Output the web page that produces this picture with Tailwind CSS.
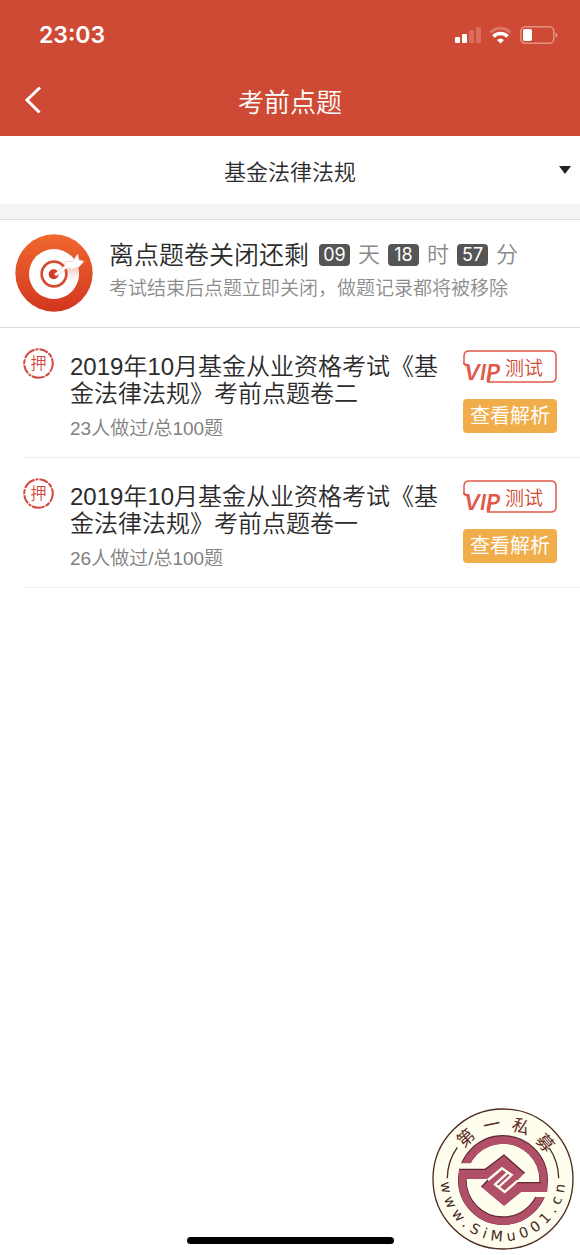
<!DOCTYPE html>
<html lang="zh-CN">
<head>
  <meta charset="UTF-8" />
  <meta name="viewport" content="width=device-width, initial-scale=1.0" />
  <title>考前点题</title>
  <script src="https://cdn.jsdelivr.net/npm/@tailwindcss/browser@4"></script>
</head>
<body class="relative min-h-screen flex flex-col bg-white text-[#2b2b2b] font-[350] font-['Liberation_Sans','Noto_Sans_CJK_SC',sans-serif]">

  <header class="bg-[#cf4a34] text-white">
    <!-- status bar -->
    <div class="h-[70px] pl-[39px] pr-[22px] flex items-center justify-between">
      <span class="text-[23px] font-semibold font-['Inter',sans-serif]">23:03</span>
      <div class="flex items-center gap-2">
        <svg class="w-[26px] h-[18px]" viewBox="0 0 26 18" fill="#fff">
          <rect x="0" y="11" width="5" height="6" rx="1" />
          <rect x="7" y="8" width="5" height="9" rx="1" />
          <rect x="14" y="4" width="5" height="13" rx="1" opacity=".2" />
          <rect x="21" y="1" width="5" height="16" rx="1" opacity=".2" />
        </svg>
        <svg class="w-[23px] h-[18px]" viewBox="0 0 23 18" fill="none" stroke="#fff" stroke-width="3">
          <path d="M1.5 6.5C7 .8 16 .8 21.5 6.5" opacity=".25" />
          <path d="M4.5 10.5C8 6.5 15 6.5 18.5 10.5" stroke-width="3.5" />
          <path d="M11.5 17.5 8 14Q11.5 11 15 14Z" fill="#fff" stroke="none" />
        </svg>
        <svg class="w-[38px] h-[18px]" viewBox="0 0 38 18" fill="none">
          <rect x=".8" y=".8" width="33" height="16.4" rx="4.5" stroke="#fff" stroke-width="1.5" opacity=".4" />
          <rect x="3" y="3" width="9" height="12" rx="2" fill="#fff" />
          <path d="M35.5 6.5Q37.5 7 37.5 9T35.5 11.5Z" fill="#fff" opacity=".45" />
        </svg>
      </div>
    </div>
    <!-- title bar -->
    <div class="h-[66px] grid grid-cols-[1fr_auto_1fr] items-center">
      <button type="button" aria-label="返回" class="self-start w-12 h-[60px] pl-6 flex items-center justify-start">
        <svg class="w-[18px] h-[28px] shrink-0" viewBox="0 0 18 28" fill="none" stroke="#fff" stroke-width="3">
          <path d="M16 1.5 3 14 15.5 26.5" />
        </svg>
      </button>
      <h1 class="text-[26px] leading-8">考前点题</h1>
    </div>
  </header>

  <div class="relative">
    <select aria-label="科目" class="block w-full h-[68px] pt-1 appearance-none bg-white text-[22px] text-center [text-align-last:center]">
      <option>基金法律法规</option>
    </select>
    <svg class="absolute right-[9px] top-[30px] w-3 h-2 pointer-events-none" viewBox="0 0 12 8"><path d="M0 0H12L6 8Z" fill="#222" /></svg>
  </div>

  <div class="h-4 bg-[#f4f4f4] border-b border-[#dedede]"></div>

  <!-- countdown -->
  <section class="h-[108px] pl-[15px] pb-[2px] flex items-center gap-4 border-b border-[#dedede]">
    <svg class="w-[78px] h-[78px] shrink-0" viewBox="15 10 234 234">
      <defs>
        <linearGradient id="disc" x1="0" y1="0" x2="0" y2="1">
          <stop offset="0" stop-color="#f0682f" />
          <stop offset="1" stop-color="#d2361f" />
        </linearGradient>
        <linearGradient id="shade" x1="0" y1="0" x2="0" y2="1">
          <stop offset="0" stop-color="#f0a896" stop-opacity=".7" />
          <stop offset="1" stop-color="#fff" stop-opacity="0" />
        </linearGradient>
      </defs>
      <circle cx="132" cy="127" r="116" fill="url(#disc)" />
      <circle cx="132" cy="130" r="75" fill="#fff" />
      <path d="M165 118 204 104Q209 140 190 174Z" fill="url(#shade)" />
      <circle cx="132" cy="130" r="37" fill="none" stroke="#d64a32" stroke-width="8" />
      <circle cx="131" cy="131" r="15" fill="#d23b25" />
      <path d="M133 130 168 102 163 93 188 92 203 70 207 88 222 92 206 110 184 116 174 110 138 136Z" fill="#fff" stroke="#f2c4b8" stroke-width="2" />
    </svg>
    <div>
      <div class="flex items-center">
        <h2 class="text-[25px] leading-9 mr-[10px]">离点题卷关闭还剩</h2>
        <div class="flex items-center gap-2 text-[22px] leading-9 text-[#888]">
          <span class="w-[31px] h-[22px] rounded-sm bg-[#555] text-white text-lg leading-[22px] text-center font-normal font-['Inter',sans-serif]">09</span>
          <span>天</span>
          <span class="w-[31px] h-[22px] rounded-sm bg-[#555] text-white text-lg leading-[22px] text-center font-normal font-['Inter',sans-serif]">18</span>
          <span>时</span>
          <span class="w-[31px] h-[22px] rounded-sm bg-[#555] text-white text-lg leading-[22px] text-center font-normal font-['Inter',sans-serif]">57</span>
          <span>分</span>
        </div>
      </div>
      <p class="text-[19px] leading-8 text-[#8c8c8c] pb-1">考试结束后点题立即关闭，做题记录都将被移除</p>
    </div>
  </section>

  <ul class="pl-[23px]">
    <li class="h-[130px] pt-5 pr-[23px] flex items-start border-b border-[#eee]">
      <svg class="w-[31px] h-[31px] shrink-0" viewBox="0 0 31 31">
        <circle cx="15.5" cy="15.5" r="14.3" fill="none" stroke="#d2483f" stroke-width="2" stroke-dasharray="9 1 5 1 13 1 3 1" />
        <text x="15.5" y="21" text-anchor="middle" font-size="16" fill="#d2483f">押</text>
      </svg>
      <div class="flex-1 ml-4 pt-[5px]">
        <h3 class="text-2xl leading-[27px]">2019年10月基金从业资格考试《基<br />金法律法规》考前点题卷二</h3>
        <p class="mt-2 text-[19px] leading-[27px] text-[#808080]">23人做过/总100题</p>
      </div>
      <div class="pt-[2px] w-[94px] flex flex-col gap-[15px] shrink-0">
        <button type="button" class="block w-full h-[34px]" aria-label="VIP测试">
          <svg class="w-full h-full" viewBox="0 0 94 34" fill="none" stroke="#df5a4b" stroke-width="1.5">
            <path d="M3 16 1 13V6Q1 1 6 1H88Q93 1 93 6V27Q93 32 88 32H24" />
            <path d="M27 24 25 32" stroke-width="3" />
            <path d="M0 13 5 16" stroke-width="2" />
            <text x="1" y="30" font-family="Inter" font-size="22" font-weight="600" font-style="italic" fill="#df5a4b" stroke="none">VIP</text>
            <text x="42" y="25" font-size="19" fill="#cf4a34" stroke="none">测试</text>
          </svg>
        </button>
        <button type="button" class="w-full h-[34px] rounded bg-[#f0ad4a] text-white text-xl leading-[35px] font-normal">查看解析</button>
      </div>
    </li>
    <li class="h-[130px] pt-5 pr-[23px] flex items-start border-b border-[#eee]">
      <svg class="w-[31px] h-[31px] shrink-0" viewBox="0 0 31 31">
        <circle cx="15.5" cy="15.5" r="14.3" fill="none" stroke="#d2483f" stroke-width="2" stroke-dasharray="9 1 5 1 13 1 3 1" />
        <text x="15.5" y="21" text-anchor="middle" font-size="16" fill="#d2483f">押</text>
      </svg>
      <div class="flex-1 ml-4 pt-[5px]">
        <h3 class="text-2xl leading-[27px]">2019年10月基金从业资格考试《基<br />金法律法规》考前点题卷一</h3>
        <p class="mt-2 text-[19px] leading-[27px] text-[#808080]">26人做过/总100题</p>
      </div>
      <div class="pt-[2px] w-[94px] flex flex-col gap-[15px] shrink-0">
        <button type="button" class="block w-full h-[34px]" aria-label="VIP测试">
          <svg class="w-full h-full" viewBox="0 0 94 34" fill="none" stroke="#df5a4b" stroke-width="1.5">
            <path d="M3 16 1 13V6Q1 1 6 1H88Q93 1 93 6V27Q93 32 88 32H24" />
            <path d="M27 24 25 32" stroke-width="3" />
            <path d="M0 13 5 16" stroke-width="2" />
            <text x="1" y="30" font-family="Inter" font-size="22" font-weight="600" font-style="italic" fill="#df5a4b" stroke="none">VIP</text>
            <text x="42" y="25" font-size="19" fill="#cf4a34" stroke="none">测试</text>
          </svg>
        </button>
        <button type="button" class="w-full h-[34px] rounded bg-[#f0ad4a] text-white text-xl leading-[35px] font-normal">查看解析</button>
      </div>
    </li>
  </ul>

  <!-- home indicator -->
  <div class="mt-auto mb-[11px] mx-auto w-[207px] h-[7px] rounded-full bg-black"></div>

  <!-- site seal -->
  <svg class="absolute right-[6px] bottom-[5px] w-[142px] h-[142px]" viewBox="22 25 426 426">
    <defs>
      <path id="topArc" d="M87 238A148 148 0 0 1 383 238" />
      <path id="bottomArc" d="M48 238A187 187 0 0 0 422 238" />
    </defs>
    <circle cx="235" cy="238" r="210" fill="#fffdee" stroke="#4b2a20" stroke-width="4" />
    <path d="M68 236Q68 185 98 143M402 236Q402 188 374 145" fill="none" stroke="#4b2a20" stroke-width="4" />
    <circle cx="235" cy="241" r="122" fill="none" stroke="#5d2b35" stroke-width="26" />
    <circle cx="235" cy="243" r="122" fill="none" stroke="#b14f68" stroke-width="22" />
    <!-- gaps that open the ring -->
    <path d="M90 191H150V208H90ZM320 277H384V292H320Z" fill="#fffdee" />
    <path d="M103 208H182L238 165 300 220 273 248H368V277H290L238 319 170 262 193 238H103Z" fill="#b14f68" />
    <path d="M103 209H182L238 166 300 221M273 249H350M170 262 193 238" fill="none" stroke="#5d2b35" stroke-width="4" />
    <g fill="none" stroke="#fffdee" stroke-width="7">
      <path d="M190 241 232 206 261 226 222 262" />
      <path d="M279 243 240 277 211 254 250 218" />
    </g>
    <text font-family="Noto Sans CJK SC" font-size="52" font-weight="400" fill="#5b2a22" text-anchor="middle">
      <textPath href="#topArc" startOffset="52%">第<tspan dx="27">一</tspan><tspan dx="27">私</tspan><tspan dx="27">募</tspan></textPath>
    </text>
    <text font-family="DejaVu Sans" font-size="43" font-weight="400" fill="#3f2a26" dx="0 15 15 15 15 15 15 15 15 15 15 15 15 15">
      <textPath href="#bottomArc" startOffset="10">www.SiMu001.cn</textPath>
    </text>
  </svg>
</body>
</html>
